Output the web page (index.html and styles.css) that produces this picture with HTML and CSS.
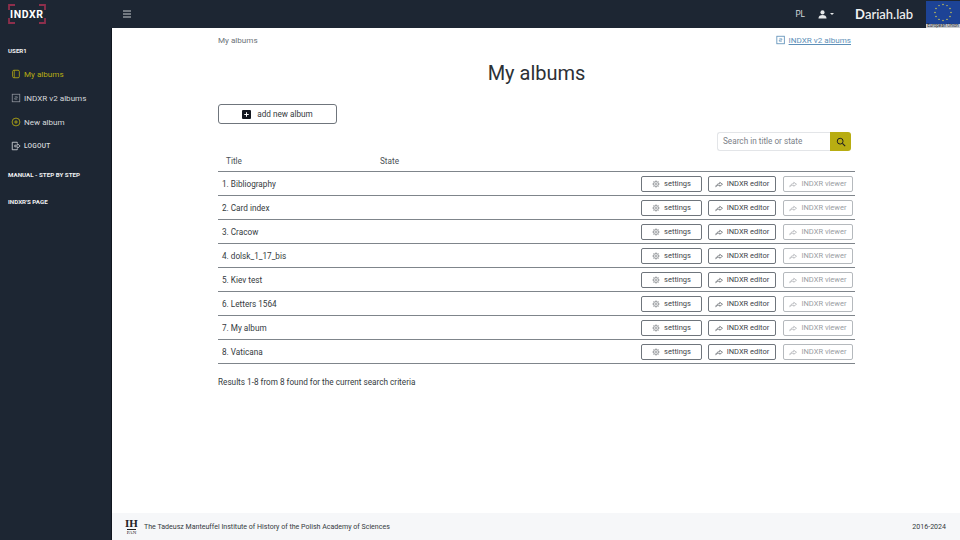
FILE: index.html
```html
<!DOCTYPE html>
<html lang="en">
<head>
<meta charset="utf-8">
<title>My albums</title>
<link rel="stylesheet" href="styles.css">
</head>
<body>
<svg class="defs" width="0" height="0" aria-hidden="true">
  <symbol id="gear" viewBox="0 0 16 16"><circle cx="8" cy="8" r="2.200" fill="none" stroke="currentColor" stroke-width=".9"/><circle cx="8" cy="8" r="5.200" fill="none" stroke="currentColor" stroke-width=".9"/><path d="M8 .8v2M8 13.200v2M.8 8h2M13.200 8h2M2.900 2.900l1.400 1.400M11.700 11.700l1.400 1.400M2.900 13.100l1.400-1.400M11.700 4.300l1.400-1.400" stroke="currentColor" stroke-width="1"/></symbol>
  <symbol id="share" viewBox="0 0 16 16"><path d="M9.500 4.500L15 8.500l-5.500 4V10.500C6 10.500 3.500 11 1.500 13.500 2 10 5 7.500 9.500 7z" fill="none" stroke="currentColor" stroke-width="1.200" stroke-linejoin="round"/></symbol>
</svg>
<header class="topbar">
  <div class="brand">
    <span class="logo">INDXR</span>
    <svg class="logo-frame" viewBox="0 0 38 20"><path d="M1 6V1h6M31 1h6v5M1 14v5h6M31 19h6v-5" fill="none" stroke="#8e2f4c" stroke-width="1.800"/></svg>
  </div>
  <svg class="burger" viewBox="0 0 10 8"><path d="M1 1h8M1 4h8M1 7h8" stroke="#c9ccd1" stroke-width="1"/></svg>
  <div class="top-right">
    <span class="lang">PL</span>
    <span class="user">
      <svg viewBox="0 0 12 10" class="user-icon"><circle cx="6" cy="2.700" r="2.300" fill="#e6e8ea"/><path d="M1.500 9.500c0-3 2-4 4.500-4s4.500 1 4.500 4z" fill="#e6e8ea"/></svg>
      <i class="caret"></i>
    </span>
    <span class="dariah"><span class="dariah-d">D</span>ariah.lab</span>
    <div class="eu">
      <svg class="eu-flag" viewBox="0 0 34 23">
        <rect width="34" height="23" fill="#1d4396"/>
        <g fill="#e6d84a">
          <circle cx="17" cy="3.500" r=".7"/><circle cx="21" cy="4.600" r=".7"/><circle cx="24" cy="7.500" r=".7"/><circle cx="25" cy="11.500" r=".7"/><circle cx="24" cy="15.500" r=".7"/><circle cx="21" cy="18.400" r=".7"/><circle cx="17" cy="19.500" r=".7"/><circle cx="13" cy="18.400" r=".7"/><circle cx="10" cy="15.500" r=".7"/><circle cx="9" cy="11.500" r=".7"/><circle cx="10" cy="7.500" r=".7"/><circle cx="13" cy="4.600" r=".7"/>
        </g>
      </svg>
      <span class="eu-label">European Union</span>
    </div>
  </div>
</header>
<div class="shell">
  <aside class="sidebar">
    <div class="side-head first">USER1</div>
    <a class="side-link active">
      <svg class="side-icon" viewBox="0 0 12 12"><rect x="2" y="1.500" width="8" height="9" rx="1.500" fill="none" stroke="currentColor" stroke-width="1"/><path d="M4 1.500v9" stroke="currentColor" stroke-width=".8"/></svg>
      My albums
    </a>
    <a class="side-link">
      <svg class="side-icon" viewBox="0 0 12 12"><rect x="1.500" y="1.500" width="9" height="9" fill="none" stroke="#8c919a" stroke-width="1"/><path d="M4.500 4.500h3v1.500h-3v1.500h3" fill="none" stroke="#8c919a" stroke-width=".8"/></svg>
      INDXR v2 albums
    </a>
    <a class="side-link">
      <svg class="side-icon" viewBox="0 0 12 12"><circle cx="6" cy="6" r="4.700" fill="none" stroke="#b8ad12" stroke-width="1"/><path d="M3.800 6h4.400M6 3.800v4.400" stroke="#b8ad12" stroke-width="1"/></svg>
      New album
    </a>
    <a class="side-link small">
      <svg class="side-icon" viewBox="0 0 12 12"><path d="M7.500 3V1.500h-6v9h6V9" fill="none" stroke="currentColor" stroke-width="1"/><path d="M4.500 5h3.500V3.500L11 6 8 8.500V7H4.500z" fill="none" stroke="currentColor" stroke-width=".9"/></svg>
      LOGOUT
    </a>
    <div class="side-head manual">MANUAL - STEP BY STEP</div>
    <div class="side-head page">INDXR'S PAGE</div>
  </aside>
  <main class="main">
    <div class="content">
      <div class="crumbs">
        <span class="crumb">My albums</span>
        <a class="v2-link"><svg class="v2-icon" viewBox="0 0 12 12"><rect x="1" y="1.500" width="9" height="9" fill="none" stroke="#5d8fb8" stroke-width="1"/><path d="M4 4.500h3v1.500H4v1.500h3" fill="none" stroke="#5d8fb8" stroke-width=".8"/></svg><span class="v2-text">INDXR v2 albums</span></a>
      </div>
      <h1 class="title">My albums</h1>
      <button class="add-btn">
        <svg class="add-icon" viewBox="0 0 10 10"><rect width="10" height="10" rx="1.200" fill="#12161f"/><path d="M5 2.500v5M2.500 5h5" stroke="#fff" stroke-width="1.100"/></svg>
        add new album
      </button>
      <div class="search-row">
        <div class="search">
          <span class="search-input">Search in title or state</span>
          <span class="search-btn"><svg viewBox="0 0 12 12" class="search-icon"><circle cx="5" cy="5" r="3.500" fill="none" stroke="#222" stroke-width="1.200"/><path d="M7.700 7.700L11 11" stroke="#222" stroke-width="1.300"/></svg></span>
        </div>
      </div>
      <div class="thead"><span class="th-title">Title</span><span>State</span></div>
      <div class="row"><span class="name">1. Bibliography</span><div class="actions"><a class="btn b1"><svg class="ico"><use href="#gear"/></svg>settings</a><a class="btn b2"><svg class="ico"><use href="#share"/></svg>INDXR editor</a><a class="btn b3"><svg class="ico"><use href="#share"/></svg>INDXR viewer</a></div></div>
      <div class="row"><span class="name">2. Card index</span><div class="actions"><a class="btn b1"><svg class="ico"><use href="#gear"/></svg>settings</a><a class="btn b2"><svg class="ico"><use href="#share"/></svg>INDXR editor</a><a class="btn b3"><svg class="ico"><use href="#share"/></svg>INDXR viewer</a></div></div>
      <div class="row"><span class="name">3. Cracow</span><div class="actions"><a class="btn b1"><svg class="ico"><use href="#gear"/></svg>settings</a><a class="btn b2"><svg class="ico"><use href="#share"/></svg>INDXR editor</a><a class="btn b3"><svg class="ico"><use href="#share"/></svg>INDXR viewer</a></div></div>
      <div class="row"><span class="name">4. dolsk_1_17_bis</span><div class="actions"><a class="btn b1"><svg class="ico"><use href="#gear"/></svg>settings</a><a class="btn b2"><svg class="ico"><use href="#share"/></svg>INDXR editor</a><a class="btn b3"><svg class="ico"><use href="#share"/></svg>INDXR viewer</a></div></div>
      <div class="row"><span class="name">5. Kiev test</span><div class="actions"><a class="btn b1"><svg class="ico"><use href="#gear"/></svg>settings</a><a class="btn b2"><svg class="ico"><use href="#share"/></svg>INDXR editor</a><a class="btn b3"><svg class="ico"><use href="#share"/></svg>INDXR viewer</a></div></div>
      <div class="row"><span class="name">6. Letters 1564</span><div class="actions"><a class="btn b1"><svg class="ico"><use href="#gear"/></svg>settings</a><a class="btn b2"><svg class="ico"><use href="#share"/></svg>INDXR editor</a><a class="btn b3"><svg class="ico"><use href="#share"/></svg>INDXR viewer</a></div></div>
      <div class="row"><span class="name">7. My album</span><div class="actions"><a class="btn b1"><svg class="ico"><use href="#gear"/></svg>settings</a><a class="btn b2"><svg class="ico"><use href="#share"/></svg>INDXR editor</a><a class="btn b3"><svg class="ico"><use href="#share"/></svg>INDXR viewer</a></div></div>
      <div class="row"><span class="name">8. Vaticana</span><div class="actions"><a class="btn b1"><svg class="ico"><use href="#gear"/></svg>settings</a><a class="btn b2"><svg class="ico"><use href="#share"/></svg>INDXR editor</a><a class="btn b3"><svg class="ico"><use href="#share"/></svg>INDXR viewer</a></div></div>
      <p class="results">Results 1-8 from 8 found for the current search criteria</p>
    </div>
    <footer class="footer">
      <div class="foot-left">
        <span class="ihpan"><span class="ih">IH</span><span class="pan">PAN</span></span>
        <span>The Tadeusz Manteuffel Institute of History of the Polish Academy of Sciences</span>
      </div>
      <span>2016-2024</span>
    </footer>
  </main>
</div>
</body>
</html>
```
FILE: styles.css
```css
* { box-sizing: border-box; }
html, body { margin: 0; height: 100%; }
body {
  width: 960px; height: 540px; overflow: hidden;
  display: flex; flex-direction: column;
  font-family: Roboto, "Noto Sans", sans-serif;
  color: #343a40; background: #fff;
}
.defs { display: block; height: 0; }
.topbar {
  height: 28px; flex: none; background: #1d2633;
  display: flex; align-items: center; color: #e6e8ea;
}
.brand { width: 112px; flex: none; padding-left: 8px; display: flex; align-items: center; height: 28px; position: relative; }
.logo { font-weight: 700; font-size: 10.500px; letter-spacing: .6px; color: #fff; padding-left: 2px; }
.logo-frame { position: absolute; left: 8px; top: 4px; width: 38px; height: 20px; }
.burger { width: 10px; height: 8px; margin-left: 10px; }
.top-right { margin-left: auto; display: flex; align-items: center; height: 28px; }
.lang { font-size: 8.200px; margin-right: 12px; color: #d5d8dc; }
.user { display: flex; align-items: center; margin-right: 21px; }
.user-icon { width: 11px; height: 9px; }
.caret { width: 0; height: 0; border: 2px solid transparent; border-top-color: #e6e8ea; border-bottom: 0; margin-left: 2px; }
.dariah { font-size: 13px; font-weight: 500; color: #f2f3f4; margin-right: 11px; font-family: "Lato", sans-serif; width: 60px; white-space: nowrap; }
.dariah-d { font-weight: 700; }
.eu { width: 34px; height: 28px; display: flex; flex-direction: column; padding-top: 1px; }
.eu-flag { width: 34px; height: 23px; display: block; flex: none; }
.eu-label { flex: 1; font-size: 4.500px; line-height: 4px; text-align: center; color: #1d2633; white-space: nowrap; background: #c9ccd0; }
.shell { flex: 1; display: flex; min-height: 0; }
.sidebar { width: 112px; flex: none; background: #1d2633; color: #e4e6e8; padding-left: 8px; border-right: 1px solid #11161f; }
.side-head { font-size: 6.200px; font-weight: 700; color: #f0f1f2; height: 10px; line-height: 10px; white-space: nowrap; }
.side-head.first { margin-top: 18px; margin-bottom: 6px; }
.side-head.manual { margin-top: 12px; }
.side-head.page { margin-top: 17px; }
.side-link { display: flex; align-items: center; height: 24px; font-size: 8.100px; gap: 3px; padding-left: 3px; color: #d7dadd; white-space: nowrap; }
.side-link.active { color: #b8ad12; }
.side-link.small { font-size: 6.600px; font-weight: 500; letter-spacing: .2px; }
.side-icon { width: 10px; height: 10px; flex: none; }
.main { flex: 1; display: flex; flex-direction: column; min-width: 0; }
.content { flex: 1; padding: 0 105px 0 106px; }
.crumbs { display: flex; justify-content: space-between; align-items: center; height: 23px; padding-right: 4px; font-size: 8.100px; color: #6c7278; }
.v2-link { display: flex; align-items: center; gap: 3px; color: #5d8fb8; }
.v2-icon { width: 10px; height: 10px; }
.v2-text { text-decoration: underline; }
.title { margin: 8px 0 0; text-align: center; font-size: 20px; font-weight: 400; line-height: 28px; color: #2c3136; }
.add-btn {
  display: flex; align-items: center; justify-content: center; gap: 6px;
  width: 119px; height: 20px; margin: 17px 0 0; padding: 0;
  border: 1px solid #6f757c; border-radius: 3px; background: #fff;
  font: 8.200px Roboto, sans-serif; color: #343a40;
}
.add-icon { width: 9px; height: 9px; }
.search-row { display: flex; justify-content: flex-end; margin-top: 8px; padding-right: 4px; }
.search { display: flex; width: 134px; height: 19px; }
.search-input { flex: 1; border: 1px solid #e3e5e8; border-right: 0; border-radius: 3px 0 0 3px; font-size: 8.200px; line-height: 17px; padding-left: 5px; color: #7b8187; }
.search-btn { width: 21px; background: #b8ad12; border-radius: 0 3px 3px 0; display: flex; align-items: center; justify-content: center; }
.search-icon { width: 10px; height: 10px; }
.thead { display: flex; height: 21px; align-items: center; font-size: 8.200px; color: #4b5157; padding-left: 8px; border-bottom: 1px solid #7f858b; }
.th-title { width: 154px; }
.row { display: flex; align-items: center; justify-content: space-between; height: 24px; border-bottom: 1px solid #7f858b; padding: 0 2px 0 4px; font-size: 8.200px; color: #343a40; }
.actions { display: flex; gap: 6px; }
.btn { display: flex; align-items: center; justify-content: center; gap: 4px; height: 16px; border: 1px solid #6f757c; border-radius: 2px; font-size: 7.500px; color: #3f454b; white-space: nowrap; }
.b1 { width: 61px; }
.b2 { width: 68px; }
.b3 { width: 70px; margin-left: 1px; border-color: #b5b9bd; color: #9a9ea3; }
.ico { width: 8px; height: 8px; flex: none; }
.results { margin: 12px 0 0; font-size: 8.200px; color: #343a40; line-height: 12px; }
.footer { height: 27px; flex: none; background: #f6f7f9; display: flex; align-items: center; justify-content: space-between; padding: 0 14px 0 13px; font-size: 7.050px; color: #343a40; }
.foot-left { display: flex; align-items: center; gap: 6px; }
.ihpan { display: flex; flex-direction: column; align-items: center; width: 13px; font-family: "Liberation Serif", serif; color: #222; }
.ih { font-size: 11px; line-height: 11px; font-weight: 700; }
.pan { font-size: 5px; line-height: 6px; border-top: 1px solid #222; }
```
